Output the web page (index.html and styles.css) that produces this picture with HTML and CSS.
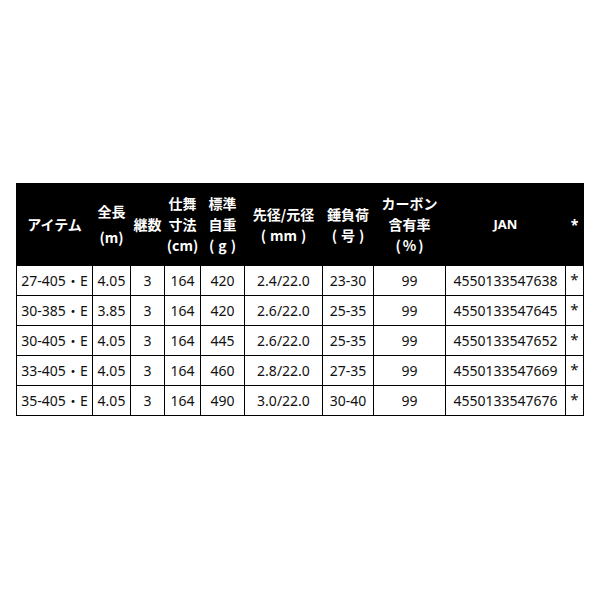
FILE: index.html
```html
<!DOCTYPE html>
<html lang="ja">
<head>
<meta charset="utf-8">
<link rel="stylesheet" href="styles.css">
</head>
<body>
<div class="page">
<table class="spec">
<colgroup>
<col style="width:76px"><col style="width:38px"><col style="width:34px"><col style="width:36px"><col style="width:44px"><col style="width:78px"><col style="width:51px"><col style="width:72px"><col style="width:120px"><col style="width:18px">
</colgroup>
<thead>
<tr>
<th>アイテム</th>
<th>全長<br><span class="unit">(m)</span></th>
<th>継数</th>
<th>仕舞<br>寸法<br>(cm)</th>
<th>標準<br>自重<br>(<span class="pad">g</span>)</th>
<th>先径/元径<br>(<span class="pad">mm</span>)</th>
<th>錘負荷<br>(<span class="pad">号</span>)</th>
<th>カーボン<br>含有率<br>(<span class="pads">%</span>)</th>
<th class="jan">JAN</th>
<th class="ast">*</th>
</tr>
</thead>
<tbody>
<tr><td>27-405・E</td><td>4.05</td><td>3</td><td>164</td><td>420</td><td>2.4/22.0</td><td>23-30</td><td>99</td><td>4550133547638</td><td class="ast">*</td></tr>
<tr><td>30-385・E</td><td>3.85</td><td>3</td><td>164</td><td>420</td><td>2.6/22.0</td><td>25-35</td><td>99</td><td>4550133547645</td><td class="ast">*</td></tr>
<tr><td>30-405・E</td><td>4.05</td><td>3</td><td>164</td><td>445</td><td>2.6/22.0</td><td>25-35</td><td>99</td><td>4550133547652</td><td class="ast">*</td></tr>
<tr><td>33-405・E</td><td>4.05</td><td>3</td><td>164</td><td>460</td><td>2.8/22.0</td><td>27-35</td><td>99</td><td>4550133547669</td><td class="ast">*</td></tr>
<tr><td>35-405・E</td><td>4.05</td><td>3</td><td>164</td><td>490</td><td>3.0/22.0</td><td>30-40</td><td>99</td><td>4550133547676</td><td class="ast">*</td></tr>
</tbody>
</table>
</div>
</body>
</html>
```

FILE: styles.css
```css
html, body {
  margin: 0;
  padding: 0;
  background: #fff;
}
.page {
  padding: 183px 0 0 16px;
}
.spec {
  border-collapse: collapse;
  table-layout: fixed;
  width: 567px;
  font-family: "Noto Sans", "Noto Sans CJK JP", sans-serif;
  color: #111;
}
.spec th {
  background: #000;
  color: #fff;
  font-family: "Noto Sans CJK JP", sans-serif;
  font-weight: 700;
  font-size: 14px;
  line-height: 21px;
  height: 81px;
  padding: 0;
  text-align: center;
  vertical-align: middle;
  white-space: nowrap;
  border: 1px solid #000;
}
.spec th .unit {
  display: inline-block;
  margin-top: 5px;
}
.spec th .pad {
  padding: 0 4px;
}
.spec th .pads {
  padding: 0 2px;
}
.spec th.jan {
  font-family: "Noto Sans", sans-serif;
  font-size: 13px;
}
.spec th.ast {
  font-family: "Noto Sans", sans-serif;
  font-size: 14px;
}
.spec td {
  border: 1px solid #000;
  height: 30px;
  box-sizing: border-box;
  padding: 0;
  font-size: 14px;
  line-height: 16px;
  text-align: center;
  vertical-align: middle;
  white-space: nowrap;
  overflow: hidden;
}
.spec td.ast {
  vertical-align: top;
  padding-top: 5px;
  font-size: 15px;
}
```
